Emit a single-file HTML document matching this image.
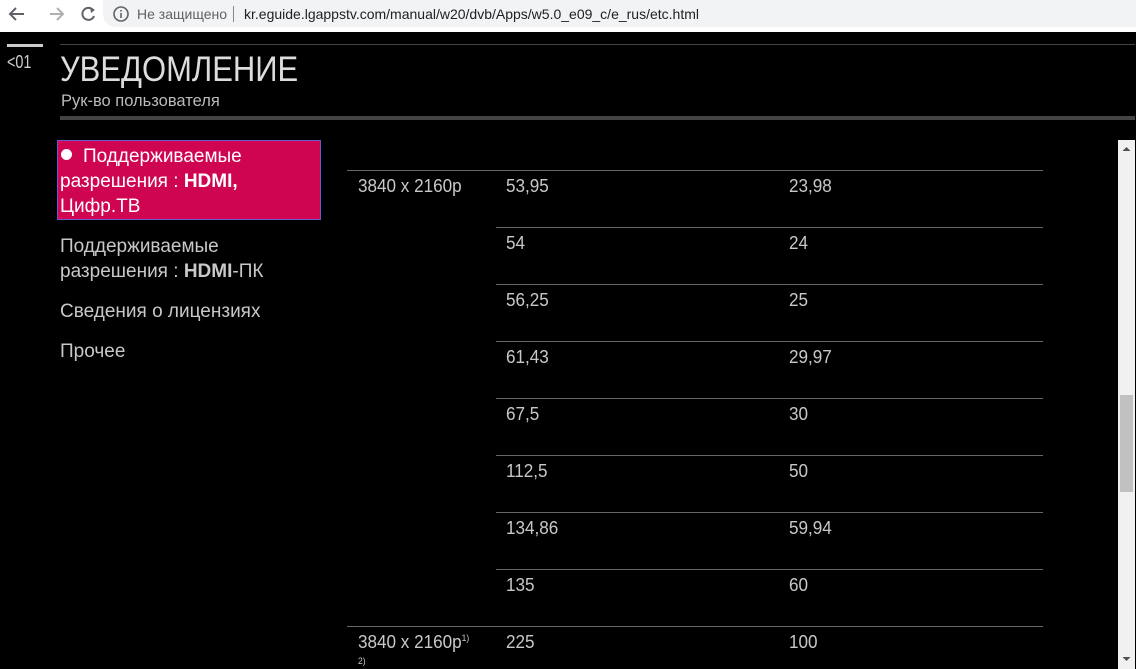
<!DOCTYPE html>
<html><head><meta charset="utf-8"><style>
body{margin:0;width:1136px;height:669px;overflow:hidden;background:#000;font-family:"Liberation Sans",sans-serif;position:relative}
.a{position:absolute}
.t{position:absolute;color:#c8c8c8;font-size:18px;white-space:nowrap;transform:scaleX(0.95);transform-origin:left}
.h{position:absolute;height:1px;background:#666}
.m{position:absolute;left:60px;color:#c8c8c8;font-size:19px;line-height:25px}
</style></head><body>
<div class="a" style="left:0;top:0;width:1136px;height:28px;background:#fff"></div>
<div class="a" style="left:103px;top:0;width:1033px;height:27px;background:#f1f3f4;border-radius:0 0 0 13px"></div>
<div class="a" style="left:0;top:28px;width:1136px;height:4px;background:#fff"></div>
<svg class="a" style="left:8px;top:5px" width="90" height="18" viewBox="0 0 90 18">
<path d="M16 9H3M8 3L2 9L8 15" stroke="#5f6368" stroke-width="2" fill="none"/>
<path d="M42 9H55M49 3L55 9L49 15" stroke="#b0b0b0" stroke-width="2" fill="none"/>
<path d="M85 5A6 6 0 1 0 86 11" stroke="#5f6368" stroke-width="2" fill="none"/><path d="M82 2L87 5L83 8Z" fill="#5f6368"/>
</svg>
<svg class="a" style="left:112px;top:5px" width="18" height="18"><circle cx="9" cy="9" r="7" stroke="#5f6368" stroke-width="1.6" fill="none"/><rect x="8.2" y="8" width="1.6" height="5" fill="#5f6368"/><rect x="8.2" y="5" width="1.6" height="1.6" fill="#5f6368"/></svg>
<div class="a" style="left:137px;top:6px;font-size:14px;color:#5f6368">Не защищено</div>
<div class="a" style="left:233px;top:6px;width:1px;height:16px;background:#888"></div>
<div class="a" style="left:244px;top:6px;font-size:14px;color:#202124">kr.eguide.lgappstv.com/manual/w20/dvb/Apps/w5.0_e09_c/e_rus/etc.html</div>

<div class="a" style="left:7px;top:44px;width:36px;height:3px;background:#ccc"></div>
<div class="a" style="left:7px;top:52px;color:#ccc;font-size:18px;transform:scaleX(.8);transform-origin:left">&lt;01</div>
<div class="h" style="left:60px;top:44px;width:1075px;background:#444"></div>
<div class="a" style="left:60px;top:50px;color:#ddd;font-size:35px;transform:scaleX(.885);transform-origin:left">УВЕДОМЛЕНИЕ</div>
<div class="a" style="left:61px;top:92px;color:#bbb;font-size:16.5px">Рук-во пользователя</div>
<div class="a" style="left:60px;top:116px;width:1075px;height:4px;background:#444"></div>

<div class="a" style="left:57px;top:140px;width:262px;height:78px;background:#d00552;border:1px solid #6a5acd"></div>
<div class="m" style="top:144px;color:#fff"><span style="display:inline-block;width:11px;height:11px;border-radius:50%;background:#fff;margin:0 11px 2px 1px"></span>Поддерживаемые<br>разрешения : <b>HDMI,</b><br>Цифр.ТВ</div>
<div class="m" style="top:234px">Поддерживаемые<br>разрешения : <b>HDMI</b>-ПК</div>
<div class="m" style="top:299px">Сведения о лицензиях</div>
<div class="m" style="top:339px">Прочее</div>

<div class="h" style="left:347px;top:170px;width:696px"></div>
<div class="h" style="left:496px;top:227px;width:547px"></div>
<div class="h" style="left:496px;top:284px;width:547px"></div>
<div class="h" style="left:496px;top:341px;width:547px"></div>
<div class="h" style="left:496px;top:398px;width:547px"></div>
<div class="h" style="left:496px;top:455px;width:547px"></div>
<div class="h" style="left:496px;top:512px;width:547px"></div>
<div class="h" style="left:496px;top:569px;width:547px"></div>
<div class="h" style="left:347px;top:626px;width:696px"></div>

<div class="t" style="left:358px;top:176px">3840 x 2160p</div>
<div class="t" style="left:506px;top:176px">53,95</div><div class="t" style="left:789px;top:176px">23,98</div>
<div class="t" style="left:506px;top:233px">54</div><div class="t" style="left:789px;top:233px">24</div>
<div class="t" style="left:506px;top:290px">56,25</div><div class="t" style="left:789px;top:290px">25</div>
<div class="t" style="left:506px;top:347px">61,43</div><div class="t" style="left:789px;top:347px">29,97</div>
<div class="t" style="left:506px;top:404px">67,5</div><div class="t" style="left:789px;top:404px">30</div>
<div class="t" style="left:506px;top:461px">112,5</div><div class="t" style="left:789px;top:461px">50</div>
<div class="t" style="left:506px;top:518px">134,86</div><div class="t" style="left:789px;top:518px">59,94</div>
<div class="t" style="left:506px;top:575px">135</div><div class="t" style="left:789px;top:575px">60</div>
<div class="t" style="left:358px;top:632px">3840 x 2160p<sup style="font-size:9px">1)</sup></div>
<div class="t" style="left:358px;top:656px;font-size:9px">2)</div>
<div class="t" style="left:506px;top:632px">225</div><div class="t" style="left:789px;top:632px">100</div>

<div class="a" style="left:1118px;top:140px;width:17px;height:529px;background:#f1f1f1"></div>
<div class="a" style="left:1120px;top:395px;width:13px;height:97px;background:#c1c1c1"></div>
<svg class="a" style="left:1121px;top:144px" width="11" height="9"><path d="M1.5 7L5.5 3L9.5 7Z" fill="#505050"/></svg>
<svg class="a" style="left:1121px;top:655px" width="11" height="9"><path d="M1.5 2L5.5 6L9.5 2Z" fill="#505050"/></svg>
</body></html>
